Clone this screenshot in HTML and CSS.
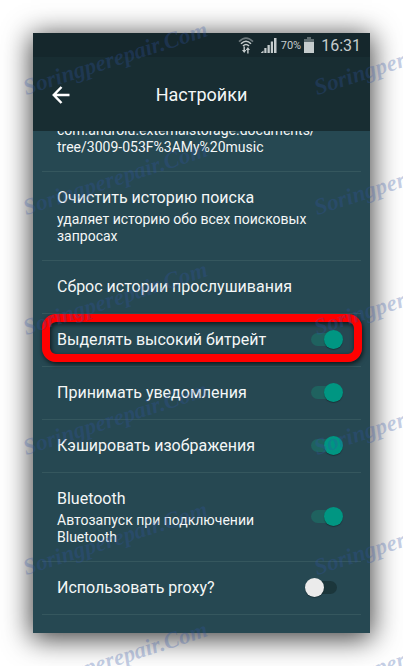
FILE: index.html
```html
<!DOCTYPE html>
<html lang="ru">
<head>
    <meta charset="UTF-8">
    <meta name="viewport" content="width=device-width, initial-scale=1.0">
    <title>Настройки</title>
    <link rel="stylesheet" href="styles.css">
</head>
<body>
    <main class="phone">
        <div class="status-bar">
            <svg class="icon-wifi" viewBox="0 0 16 17" aria-hidden="true">
                <g fill="none" stroke="currentColor" stroke-width="1.6">
                    <path d="M1 4.6Q8-2.4 15 4.6" opacity=".5"/>
                    <path d="M3 6.8Q8 1.8 13 6.8"/>
                    <path d="M5 9Q8 6 11 9"/>
                </g>
                <path fill="currentColor" d="M5.5 9.5h1.4v3.5h1.5L6.2 16 4 13h1.5zM9.2 16.5h1.4V13H12L9.9 10 7.7 13h1.5z"/>
            </svg>
            <svg class="icon-signal" viewBox="0 0 16 16" aria-hidden="true">
                <path fill="currentColor" d="M0 15.500L2.500 13.500V16H0zM3.300 11H5.500V16H3.300zM6.500 8H8.800V16H6.500zM9.800 4.500H12V16H9.800zM13 1H15.500V16H13z"/>
            </svg>
            <span class="percent">70%</span>
            <svg class="icon-battery" viewBox="0 0 10 16" aria-hidden="true">
                <path fill="#5f6d70" d="M3 0h4v2h3v4H0V2h3z"/>
                <path fill="currentColor" d="M0 5h10v11H0z"/>
            </svg>
            <span class="time">16:31</span>
        </div>

        <header class="header">
            <button class="back" type="button" aria-label="Назад">
                <svg viewBox="0 0 18 18" aria-hidden="true">
                    <path fill="none" stroke="currentColor" stroke-width="2.500" d="M17.500 9H2M9.500 1L1.800 9l7.700 8"/>
                </svg>
            </button>
            <h1>Настройки</h1>
        </header>

        <div class="list">
            <div class="row row-cut">
                <div class="text">
                    <p class="note">com.android.externalstorage.documents/<br>tree/3009-053F%3AMy%20music</p>
                </div>
            </div>
            <div class="row">
                <div class="text">
                    <h2>Очистить историю поиска</h2>
                    <p class="note">удаляет историю обо всех поисковых запросах</p>
                </div>
            </div>
            <div class="row">
                <div class="text"><h2>Сброс истории прослушивания</h2></div>
            </div>
            <label class="row highlight">
                <span class="text"><span class="name">Выделять высокий битрейт</span></span>
                <input class="switch" type="checkbox" checked>
            </label>
            <label class="row">
                <span class="text"><span class="name">Принимать уведомления</span></span>
                <input class="switch" type="checkbox" checked>
            </label>
            <label class="row">
                <span class="text"><span class="name">Кэшировать изображения</span></span>
                <input class="switch" type="checkbox" checked>
            </label>
            <label class="row">
                <span class="text">
                    <span class="name">Bluetooth</span>
                    <span class="note">Автозапуск при подключении Bluetooth</span>
                </span>
                <input class="switch" type="checkbox" checked>
            </label>
            <label class="row">
                <span class="text"><span class="name">Использовать proxy?</span></span>
                <input class="switch" type="checkbox">
            </label>
        </div>
    </main>

    <div class="watermark" aria-hidden="true">
        <span>Soringperepair.Com</span><span>Soringperepair.Com</span>
        <span>Soringperepair.Com</span><span>Soringperepair.Com</span>
        <span>Soringperepair.Com</span><span>Soringperepair.Com</span>
        <span>Soringperepair.Com</span><span>Soringperepair.Com</span>
        <span>Soringperepair.Com</span><span>Soringperepair.Com</span>
        <span>Soringperepair.Com</span><span>Soringperepair.Com</span>
    </div>
</body>
</html>
```
FILE: styles.css
```css
* {
    box-sizing: border-box;
}
body {
    position: relative;
    margin: 0;
    padding: 33px;
    min-height: 100vh;
    overflow: hidden;
    display: flex;
    background: #fff;
    font-family: Roboto, "Noto Sans", sans-serif;
}
h1, h2, p {
    margin: 0;
    font-weight: normal;
}
.phone {
    flex: 1;
    background: #264852;
    color: #f4f7f7;
    box-shadow: 0 4px 26px 2px rgba(0, 0, 0, 0.75);
}

/* Status bar */
.status-bar {
    display: flex;
    justify-content: flex-end;
    align-items: center;
    height: 24px;
    padding-right: 9px;
    background: #15272c;
    color: #c5cccd;
}
.icon-wifi {
    width: 16px;
    height: 17px;
    margin-right: 7px;
}
.icon-signal {
    width: 16px;
    height: 16px;
    margin-right: 4px;
}
.icon-battery {
    width: 10px;
    height: 16px;
    margin: 0 7px 0 3px;
}
.percent {
    font-size: 11px;
}
.time {
    font-size: 16px;
}

/* Title bar */
.header {
    display: grid;
    grid-template-columns: 56px 1fr 56px;
    align-items: center;
    height: 74px;
    padding-top: 2px;
    background: #182d32;
}
.header h1 {
    font-size: 18px;
    line-height: 24px;
    text-align: center;
}
.back {
    width: 56px;
    height: 48px;
    padding: 0 0 0 19px;
    border: none;
    background: none;
    color: #fff;
    text-align: left;
    cursor: pointer;
}
.back svg {
    display: block;
    width: 18px;
    height: 18px;
}

/* Settings */
.list {
    overflow: hidden;
    padding: 0 9px;
}
.row {
    position: relative;
    display: flex;
    align-items: center;
    padding: 15px 18px 15px 15px;
    border-bottom: 1px solid #35575e;
}
.row-cut {
    margin-top: -24px;
}
.text {
    flex: 1;
}
.row h2, .name {
    display: block;
    font-size: 16px;
    line-height: 22px;
}
.note {
    display: block;
    font-size: 14px;
    line-height: 17px;
}
h2 + .note, .name + .note {
    margin-top: 2px;
}
.highlight::after {
    content: "";
    position: absolute;
    inset: 0 -1px 4px 0;
    border: 8px solid #f00;
    border-radius: 14px;
    box-shadow: 1px 2px 5px rgba(0, 0, 0, 0.7), inset 1px 2px 5px rgba(0, 0, 0, 0.7);
}
.switch {
    appearance: none;
    position: relative;
    flex: none;
    width: 38px;
    height: 20px;
    margin: 0;
    cursor: pointer;
}
.switch::before {
    content: "";
    position: absolute;
    top: 3px;
    left: 6px;
    width: 26px;
    height: 13px;
    border-radius: 7px;
    background: #1b363b;
}
.switch::after {
    content: "";
    position: absolute;
    top: 0;
    left: 0;
    width: 19px;
    height: 19px;
    border-radius: 50%;
    background: #ebebeb;
    box-shadow: 0 1px 1px rgba(0, 0, 0, 0.3);
}
.switch:checked::before {
    background: #1f625f;
}
.switch:checked::after {
    left: 19px;
    background: #009682;
}

/* Watermark */
.watermark {
    position: absolute;
    inset: 0;
    overflow: hidden;
    display: grid;
    grid-template-columns: 291px 291px;
    grid-auto-rows: 120px;
    align-items: end;
    padding-left: 34px;
    pointer-events: none;
    color: rgba(50, 85, 165, 0.28);
    font: italic bold 23px "Liberation Serif", serif;
}
.watermark span {
    padding-bottom: 20px;
    transform: rotate(-18deg);
    transform-origin: left bottom;
}
```
